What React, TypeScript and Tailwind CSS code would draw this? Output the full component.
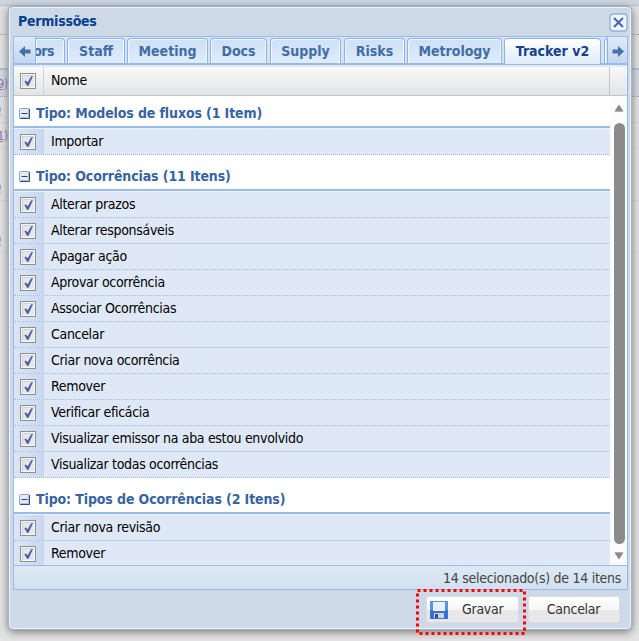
import type { ReactNode } from "react";
import clsx from "clsx";

interface Group {
  title: string;
  first?: boolean;
  items: string[];
}

const GROUPS: Group[] = [
  {
    title: "Tipo: Modelos de fluxos (1 Item)",
    first: true,
    items: ["Importar"],
  },
  {
    title: "Tipo: Ocorrências (11 Itens)",
    items: [
      "Alterar prazos",
      "Alterar responsáveis",
      "Apagar ação",
      "Aprovar ocorrência",
      "Associar Ocorrências",
      "Cancelar",
      "Criar nova ocorrência",
      "Remover",
      "Verificar eficácia",
      "Visualizar emissor na aba estou envolvido",
      "Visualizar todas ocorrências",
    ],
  },
  {
    title: "Tipo: Tipos de Ocorrências (2 Itens)",
    items: ["Criar nova revisão", "Remover"],
  },
];

const TABS = [
  { label: "Staff", box: "w-[58px] mr-[2px]" },
  { label: "Meeting", box: "w-[81px] mr-[2px]" },
  { label: "Docs", box: "w-[57px] mr-[3px]" },
  { label: "Supply", box: "w-[71px] mr-[3px]" },
  { label: "Risks", box: "w-[61px] mr-[2px]" },
  { label: "Metrology", box: "w-[95px] mr-[2px]" },
];

function Checkbox() {
  return (
    <span className="block h-4 w-4 shrink-0 border border-[#8e8f8f] bg-[#f6f6f6] p-px">
      <svg viewBox="0 0 12 12" className="block h-3 w-3">
        <rect width="12" height="12" fill="#cfd2d7" />
        <rect x="1" y="1" width="11" height="11" fill="#e4e6ea" />
        <path d="M2.4 6.2 4 5.4 5.6 7.6 9 1.6 11 1 6.6 10.8H5Z" fill="#4b5fa0" />
      </svg>
    </span>
  );
}

function Collapse() {
  return (
    <svg viewBox="0 0 11 11" className="mr-[6px] h-[11px] w-[11px] shrink-0">
      <rect x="0.5" y="0.5" width="10" height="10" rx="1" fill="#e3eaf3" stroke="#8fa5c4" />
      <path d="M9.5 1.5v8h-8" fill="none" stroke="#a9b9cf" />
      <path d="M10.5 1v9.5H1" fill="none" stroke="#31517f" />
      <path d="M2.5 5.5h6" stroke="#27446f" />
    </svg>
  );
}

function Arrow({ flip }: { flip?: boolean }) {
  return (
    <svg viewBox="0 0 12 11" className={clsx("h-[11px] w-3", flip && "-scale-x-100")}>
      <path d="M6 0 12 5.5 6 11V7.5H0.5V3.5H6Z" fill="#4870a8" />
    </svg>
  );
}

function Tab({ children, className, active }: { children?: ReactNode; className?: string; active?: boolean }) {
  return (
    <div
      className={clsx(
        "flex shrink-0 items-center rounded-t-[4px] border border-b-0 border-[#8db2e3] text-[14px] font-bold whitespace-nowrap",
        active
          ? "h-[26px] bg-linear-to-b from-white to-[#deecfd] text-[#15428b]"
          : "h-[25px] bg-linear-to-b from-[#cfe0f5] to-[#deecfd] text-[#416da3] shadow-[inset_1px_1px_0_#f3f8fe,inset_-1px_0_0_#f3f8fe]",
        className,
      )}
    >
      {children}
    </div>
  );
}

function Row({ label }: { label: string }) {
  return (
    <div className="flex h-[26px] shrink-0 border-b border-dotted border-[#a3bae9] bg-[#dfe8f6]">
      <div className="flex w-[30px] items-center border-r border-[#d0d6e0] bg-linear-to-r from-[#dae6f6] to-[#c8d8ef] pt-px pl-[6px]">
        <Checkbox />
      </div>
      <span className="pl-[7px] text-[14px] leading-[25px] tracking-[-0.32px] whitespace-nowrap text-black">{label}</span>
    </div>
  );
}

export default function App() {
  return (
    <div className="relative h-[641px] w-[639px] overflow-hidden bg-[#e3e3e3] font-['DejaVu_Sans_Condensed','DejaVu_Sans',sans-serif]">
      {/* Page behind the window */}
      <div className="flex h-full flex-col text-[13px] tracking-[-0.8px] text-[#8b76b4]">
        <div className="h-[5px] bg-[#ced5de]" />
        <div className="h-[29px] border-t border-[#b4c3d8] bg-[#e0e0e0]" />
        <div className="h-[34px] border-t border-dotted border-[#999999]" />
        <div className="h-[28px] border-t-2 border-[#a9bfdd] bg-[#d3d8e1] leading-[27px]">
          <span className="-ml-[3px] underline">9)</span>
        </div>
        <div className="h-[26px] border-t border-dotted border-[#999999] leading-[26px]">
          <span className="-ml-[3px] underline">)</span>
        </div>
        <div className="h-[26px] border-t border-[#d5d5d5] leading-[26px]">
          <span className="-ml-[3px] underline">1)</span>
        </div>
        <div className="h-[52px] border-t border-[#d5d5d5] pt-[26px] leading-[26px]">
          <span className="-ml-[3px] underline">)</span>
        </div>
        <div className="h-[52px] border-t border-[#d5d5d5] pt-[26px] leading-[26px]">
          <span className="-ml-[3px] underline">)</span>
        </div>
        <div className="border-t border-[#d5d5d5]" />
      </div>

      {/* Modal window */}
      <div className="absolute top-[6px] left-[8px] flex h-[624px] w-[624px] flex-col rounded-[5px] border border-[#a2b1c5] bg-[#ced9e7] pr-[3px] pl-1 shadow-[0_2px_9px_#777777,inset_0_0_0_1px_#eef3f9]">
        <div className="flex h-[29px] shrink-0 items-center justify-between pl-[5px]">
          <span className="text-[14px] font-bold tracking-[-0.25px] text-[#04408c]">Permissões</span>
          <svg viewBox="0 0 19 19" className="mt-px h-[19px] w-[19px]">
            <rect x="1" y="1" width="17" height="17" rx="3" fill="#f0f5fd" stroke="#8fb1e0" strokeWidth="1.4" />
            <path d="m5 5 9 9M14 5l-9 9" stroke="#4564ad" strokeWidth="2" />
          </svg>
        </div>

        <div className="flex h-[554px] shrink-0 flex-col border border-[#99bbe8]">
          {/* Tab strip */}
          <div className="flex h-[28px] shrink-0 border-b-2 border-[#99bbe8] bg-[#d5e3f5]">
            <div className="flex w-[22px] shrink-0 items-center justify-center border-r border-[#8db2e3] bg-linear-to-b from-[#dfeafa] to-[#c4d6ee] pt-[3px]">
              <Arrow flip />
            </div>
            <div className="flex h-[27px] w-[571px] shrink-0 overflow-hidden pt-px">
              <Tab className="mr-[2px] w-[29px] justify-end rounded-tl-none border-l-0 pr-[10px]">
                <span className="tracking-[-0.5px]">ors</span>
              </Tab>
              {TABS.map((tab) => (
                <Tab key={tab.label} className={clsx("justify-center", tab.box)}>
                  {tab.label}
                </Tab>
              ))}
              <Tab active className="mr-[3px] w-[97px] justify-center">
                Tracker v2
              </Tab>
              <Tab className="w-[20px]" />
            </div>
            <div className="flex w-[20px] shrink-0 items-center justify-center border-l border-[#8db2e3] bg-linear-to-b from-[#dfeafa] to-[#c4d6ee] pt-[3px]">
              <Arrow />
            </div>
          </div>
          <div className="h-[2px] shrink-0 bg-[#deecfd]" />

          {/* Column header */}
          <div className="flex h-[29px] shrink-0 border-b border-[#c5c5c5] bg-linear-to-b from-[#f9f9f9] to-[#e3e4e6]">
            <div className="flex w-[30px] items-center border-r border-[#d0d0d0] pl-[6px]">
              <Checkbox />
            </div>
            <span className="flex-1 pl-[7px] text-[14px] leading-[26px] tracking-[-0.32px] text-black">Nome</span>
            <span className="w-[18px] border-l border-[#c5c5c5]" />
          </div>

          {/* Grouped rows */}
          <div className="flex h-[469px] shrink-0 overflow-hidden bg-white">
            <div className="flex flex-1 flex-col">
              {GROUPS.map((group) => (
                <div key={group.title}>
                  <div
                    className={clsx(
                      "flex items-end border-b-2 border-[#99bbe8] pb-[4px] pl-[5px] text-[14px] leading-[18px] font-bold text-[#3764a0]",
                      group.first ? "h-[32px]" : "h-[36px]",
                    )}
                  >
                    <span className="flex h-[18px] items-center">
                      <Collapse />
                      <span className="tracking-[-0.12px] whitespace-nowrap">{group.title}</span>
                    </span>
                  </div>
                  <div className="h-px bg-[#eef3fb]" />
                  {group.items.map((item) => (
                    <Row key={item} label={item} />
                  ))}
                </div>
              ))}
            </div>
            {/* Scrollbar */}
            <div className="flex w-[17px] flex-col items-center bg-[#fcfcfc] pt-[8px] pl-px text-[#8b8b8b]">
              <svg viewBox="0 0 10 8" className="h-2 w-[10px] shrink-0">
                <path d="M5 1 9 7.2H1Z" fill="currentColor" stroke="currentColor" strokeLinejoin="round" strokeWidth="0.8" />
              </svg>
              <div className="mt-[11px] h-[421px] w-[11px] shrink-0 rounded-full bg-[#8b8b8b]" />
              <svg viewBox="0 0 10 8" className="mt-[8px] h-2 w-[10px] shrink-0">
                <path d="M5 7 9 0.8H1Z" fill="currentColor" stroke="currentColor" strokeLinejoin="round" strokeWidth="0.8" />
              </svg>
            </div>
          </div>

          {/* Selection summary */}
          <div className="h-[24px] shrink-0 border-t border-[#99bbe8] bg-linear-to-b from-[#dfe9f5] to-[#d1e0f0] pr-[6px] text-right text-[14px] leading-[24px] tracking-[-0.28px] text-[#444444]">
            14 selecionado(s) de 14 itens
          </div>
        </div>

        {/* Buttons */}
        <div className="flex justify-end gap-[9px] pt-[6px] pr-[8px] text-[14px] tracking-[-0.28px] text-[#333333]">
          <button className="flex h-[27px] w-[93px] items-center rounded-[3px] border border-[#d9dde2] bg-linear-to-b from-white via-[#f6f6f6] via-50% to-[#e8e8e8] to-55% pl-[3px]">
            <svg viewBox="0 0 18 18" className="h-[18px] w-[18px]">
              <path d="M0 0h18v18H0Z" fill="#5b93ea" />
              <path d="M0 9h18v9H0Z" fill="#3a72d4" />
              <rect x="3" y="1" width="12" height="9" fill="#e6f1fb" />
              <rect x="4" y="12" width="10" height="5" fill="#cbd5e8" />
              <rect x="5" y="13" width="3" height="4" fill="#344d96" />
            </svg>
            <span className="ml-[14px]">Gravar</span>
          </button>
          <button className="h-[27px] w-[92px] rounded-[3px] border border-[#d9dde2] bg-linear-to-b from-white via-[#f6f6f6] via-50% to-[#e8e8e8] to-55% pr-px">
            Cancelar
          </button>
        </div>
      </div>

      {/* Highlight around the save button */}
      <svg className="absolute top-[588px] left-[416px] h-[47px] w-[110px]">
        <rect x="1.5" y="2.5" width="107" height="43" fill="none" stroke="#ff0000" strokeWidth="3" strokeDasharray="3 3" />
      </svg>
    </div>
  );
}
